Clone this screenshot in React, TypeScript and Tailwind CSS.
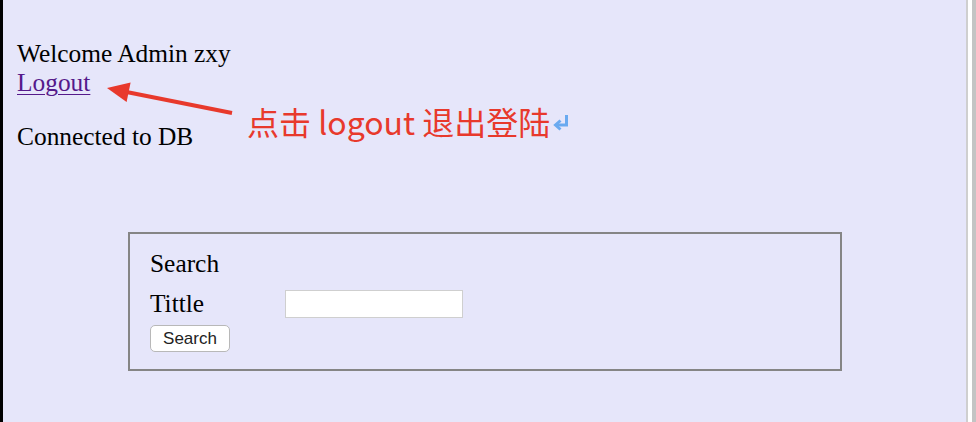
import React from "react";

export default function App() {
  return (
    <div className="relative flex h-[422px] w-[976px] overflow-hidden bg-[#e6e6fa] font-['Liberation_Serif',serif] text-black">
      <div className="w-[3px] bg-black" />
      <div className="flex-1 pl-[14px] pt-[39px]">
        <div className="text-[25.4px] leading-[29px]">Welcome Admin zxy</div>
        <div className="text-[25.4px] leading-[29px]">
          <a href="#" className="text-[#551a8b] underline decoration-1 underline-offset-[3px]">
            Logout
          </a>
        </div>
        <p className="mt-[25px] text-[25.4px] leading-[29px]">Connected to DB</p>
        <div className="ml-[111px] mt-[81px] w-[714px] border-2 border-[#858585] pb-[17px] pl-[20px] pt-[15px]">
          <div className="h-[29px] text-[25.4px] leading-[29px]">Search</div>
          <div className="mt-[11px] flex h-[29px] items-center">
            <span className="w-[135px] text-[25.4px] leading-[29px]">Tittle</span>
            <input
              type="text"
              className="h-[28px] w-[178px] border border-[#cfcfcf] bg-white outline-none"
            />
          </div>
          <button className="mt-[7px] flex h-[27px] w-[80px] items-center justify-center rounded-[5px] border border-[#b8b8b8] bg-white font-['Liberation_Sans',sans-serif] text-[17px] leading-none text-[#222]">
            Search
          </button>
        </div>
      </div>
      <div className="w-[2px] bg-[#cfcfcf]" />
      <div className="w-[4px] bg-white" />
      <div className="w-[4px] bg-[#c4c4c4]" />

      {/* annotation arrow */}
      <svg className="absolute left-0 top-0" width="976" height="422" viewBox="0 0 976 422">
        <line x1="232" y1="113" x2="124" y2="91.5" stroke="#e8392c" strokeWidth="4" />
        <polygon points="107,88 130.6,82.5 126.6,102.1" fill="#e8392c" />
      </svg>
      <div className="absolute left-[247px] top-[103px] flex items-center font-['Noto_Sans_CJK_SC',sans-serif] text-[32px] leading-[36px] text-[#e8392c]">
        <span>点击 logout 退出登陆</span>
        <svg className="ml-[2px] mt-[2px]" width="18" height="17" viewBox="0 0 18 17">
          <path d="M14.5 1 V11 H4" fill="none" stroke="#6aaaf0" strokeWidth="3" />
          <path d="M8.5 6.5 L3.5 11 L8.5 15.5" fill="none" stroke="#6aaaf0" strokeWidth="3" />
        </svg>
      </div>
    </div>
  );
}
